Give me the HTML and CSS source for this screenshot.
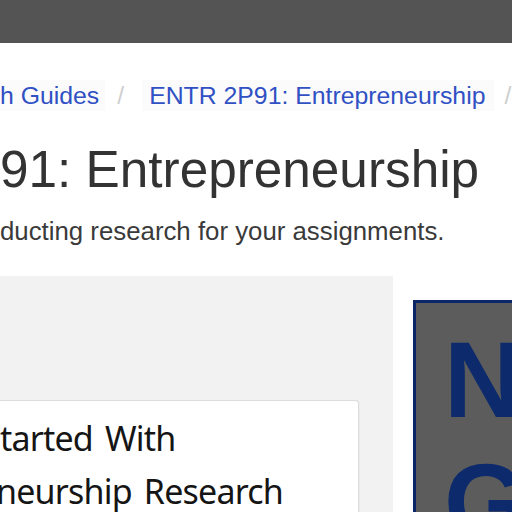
FILE: index.html
```html
<!DOCTYPE html>
<html lang="en">
<head>
<meta charset="utf-8">
<title>ENTR 2P91: Entrepreneurship</title>
<link rel="stylesheet" href="styles.css">
</head>
<body>
<header class="topbar"></header>
<nav class="crumbs">
  <a class="crumb first" href="#">h Guides</a>
  <span class="sep">/</span>
  <a class="crumb" href="#">ENTR 2P91: Entrepreneurship</a>
  <span class="sep last">/</span>
</nav>
<h1 class="title">91: Entrepreneurship</h1>
<p class="subtitle">ducting research for your assignments.</p>
<main class="main">
  <section class="panel">
    <div class="card">
      <h2 class="card-text">
        <span class="line">tarted With</span>
        <span class="line second">neurship Research</span>
      </h2>
    </div>
  </section>
  <aside class="promo">
    <div class="promo-box">
      <div class="promo-text">N<br>G</div>
    </div>
  </aside>
</main>
</body>
</html>
```
FILE: styles.css
```css
html, body {
  margin: 0;
  padding: 0;
  background: #fff;
  overflow: hidden;
  width: 512px;
  height: 512px;
}
body {
  font-family: "Liberation Sans", Arial, sans-serif;
}
.topbar {
  height: 43px;
  background: #545454;
}
.crumbs {
  display: flex;
  align-items: center;
  margin-top: 37px;
  height: 31px;
  white-space: nowrap;
  font-size: 24.8px;
}
.crumb {
  display: block;
  line-height: 31px;
  color: #3050c4;
  text-decoration: none;
  background: #fbfbfb;
  padding: 0 9px 0 7px;
}
.crumb.first {
  padding: 0 6px 0 0;
}
.sep {
  color: #cfcfcf;
  margin: 0 18px 0 12px;
}
.sep.last {
  margin: 0 0 0 10px;
}
.title {
  margin: 31px 0 0;
  font-weight: normal;
  font-size: 51.3px;
  line-height: 56px;
  color: #333;
  white-space: nowrap;
}
.subtitle {
  margin: 18px 0 0;
  font-size: 25.8px;
  line-height: 30px;
  color: #3a3a3a;
  white-space: nowrap;
}
.main {
  display: flex;
  margin-top: 30px;
  gap: 20px;
}
.panel {
  flex: 0 0 393px;
  height: 260px;
  background: #f2f2f2;
  padding-top: 124px;
  box-sizing: border-box;
}
.card {
  width: 359px;
  background: #fff;
  border: 1px solid #dcdcdc;
  border-left: none;
  border-radius: 0 4px 0 0;
  box-shadow: 1px 0 0 #ececec;
  box-sizing: border-box;
  padding-top: 11px;
  height: 200px;
}
.card-text {
  margin: 0;
  font-family: "Noto Sans", sans-serif;
  font-weight: normal;
  font-size: 34px;
  line-height: 53px;
  letter-spacing: -0.8px;
  word-spacing: 4px;
  color: #151515;
  white-space: nowrap;
}
.line {
  display: block;
}
.line.second {
  margin-left: -4px;
}
.promo {
  flex: 0 0 200px;
  padding-top: 24px;
}
.promo-box {
  border: 3px solid #0b2566;
  background: #5c5c5c;
  height: 300px;
  padding: 16px 0 0 28px;
}
.promo-text {
  font-weight: bold;
  font-size: 107px;
  line-height: 122px;
  color: #0c2a6c;
}
```
